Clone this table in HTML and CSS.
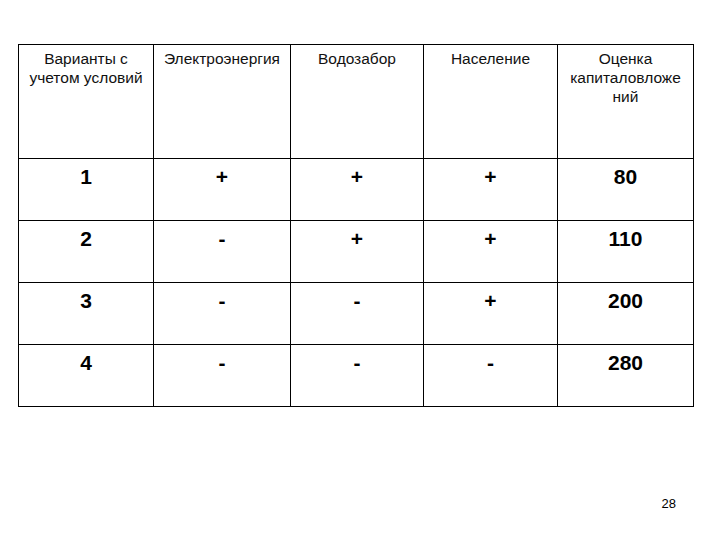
FILE: index.html
```html
<!DOCTYPE html>
<html lang="ru">
<head>
<meta charset="utf-8">
<title>Варианты</title>
<link rel="stylesheet" href="styles.css">
</head>
<body>
<div class="slide">
  <table class="grid">
    <colgroup>
      <col class="c1"><col class="c2"><col class="c3"><col class="c4"><col class="c5">
    </colgroup>
    <thead>
      <tr class="head">
        <th>Варианты с учетом условий</th>
        <th>Электроэнергия</th>
        <th>Водозабор</th>
        <th>Население</th>
        <th>Оценка капиталовложе ний</th>
      </tr>
    </thead>
    <tbody>
      <tr><td>1</td><td>+</td><td>+</td><td>+</td><td>80</td></tr>
      <tr><td>2</td><td>-</td><td>+</td><td>+</td><td>110</td></tr>
      <tr><td>3</td><td>-</td><td>-</td><td>+</td><td>200</td></tr>
      <tr><td>4</td><td>-</td><td>-</td><td>-</td><td>280</td></tr>
    </tbody>
  </table>
  <div class="footer"><span class="pagenum">28</span></div>
</div>
</body>
</html>
```
FILE: styles.css
```css
html, body {
  margin: 0;
  padding: 0;
  background: #ffffff;
}
body {
  font-family: "Liberation Sans", Arial, sans-serif;
  color: #000000;
}
.slide {
  width: 720px;
  height: 540px;
  box-sizing: border-box;
  padding: 44px 28px 0 18px;
  display: flex;
  flex-direction: column;
}
.grid {
  border-collapse: collapse;
  table-layout: fixed;
  width: 675px;
}
.c1 { width: 135px; }
.c2 { width: 137px; }
.c3 { width: 133px; }
.c4 { width: 134px; }
.c5 { width: 136px; }
.grid th,
.grid td {
  border: 1px solid #000000;
  text-align: center;
  vertical-align: top;
}
.grid th {
  font-weight: normal;
  font-size: 15.5px;
  line-height: 19px;
  padding: 4px 4px 0;
  height: 109px;
  color: #111111;
}
.grid td {
  font-weight: bold;
  font-size: 21px;
  line-height: 24px;
  padding: 6px 4px 0;
  height: 55px;
}
.footer {
  display: flex;
  justify-content: flex-end;
  margin-top: 89px;
  padding-right: 16px;
}
.pagenum {
  font-size: 13px;
  line-height: 16px;
}
```
